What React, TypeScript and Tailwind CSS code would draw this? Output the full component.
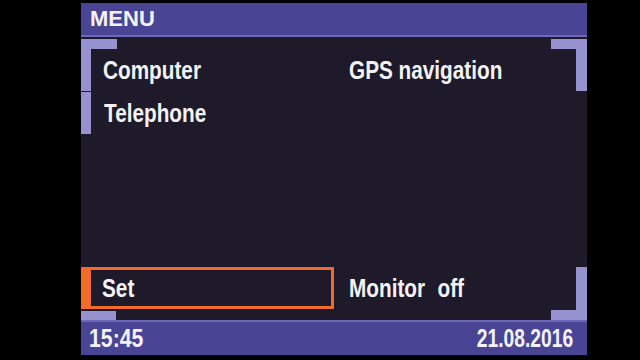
const font = "font-['Liberation_Sans',sans-serif]";
const label = 'self-center font-bold text-[25px] leading-none scale-x-[0.83] origin-left whitespace-nowrap';

function Bar({ className = '' }: { className?: string }): React.ReactElement {
    return <div className={`bg-[#9592cf] ${className}`} />;
}

function App(): React.ReactElement {
    return (
        <div className="w-[640px] h-[360px] bg-black pl-[81px] pt-[3px]">
            <div className={`w-[506px] h-[352px] flex flex-col bg-[#1e1a29] text-[#f3f2f6] ${font}`}>
                {/* header */}
                <div className="h-[34px] bg-[#4a4494] border-b-2 border-[#6c68b6] flex items-center pl-[9px]">
                    <span className="font-bold text-[22px] leading-none">MENU</span>
                </div>

                {/* body */}
                <div className="flex-1 flex flex-col justify-between pt-[2px]">
                    <div className="flex flex-col">
                        <div className="h-[10px] flex justify-between">
                            <Bar className="w-[36px]" />
                            <Bar className="w-[36px]" />
                        </div>
                        <div className="h-[42px] flex">
                            <div className="w-[253px] flex">
                                <Bar className="w-[10px]" />
                                <span className={`ml-[12px] ${label}`}>Computer</span>
                            </div>
                            <div className="flex-1 flex justify-between">
                                <span className={`ml-[15px] ${label}`}>GPS navigation</span>
                                <Bar className="w-[11px]" />
                            </div>
                        </div>
                        <div className="h-[42px] flex mt-[1px]">
                            <Bar className="w-[10px]" />
                            <span className={`ml-[13px] ${label}`}>Telephone</span>
                        </div>
                    </div>

                    <div className="flex flex-col">
                        <div className="h-[43px] flex">
                            <div className="w-[253px] h-[42px] border-[3px] border-l-[10px] border-[#f26b2b] flex pl-[11px]">
                                <span className={label}>Set</span>
                            </div>
                            <div className="flex-1 flex justify-between">
                                <span className={`ml-[15px] ${label} [word-spacing:8px]`}>Monitor off</span>
                                <Bar className="w-[11px]" />
                            </div>
                        </div>
                        <div className="h-[10px] flex justify-between">
                            <Bar className="w-[35px] mt-[1px]" />
                            <Bar className="w-[36px]" />
                        </div>
                    </div>
                </div>

                {/* footer */}
                <div className="h-[35px] bg-[#4a4494] border-t-2 border-[#6c68b6] flex items-center justify-between pl-[8px] pr-[14px]">
                    <span className="font-bold text-[25px] leading-none scale-x-[0.85] origin-left">15:45</span>
                    <span className="font-bold text-[25px] leading-none scale-x-[0.77] origin-right">21.08.2016</span>
                </div>
            </div>
        </div>
    );
}

export default App;
